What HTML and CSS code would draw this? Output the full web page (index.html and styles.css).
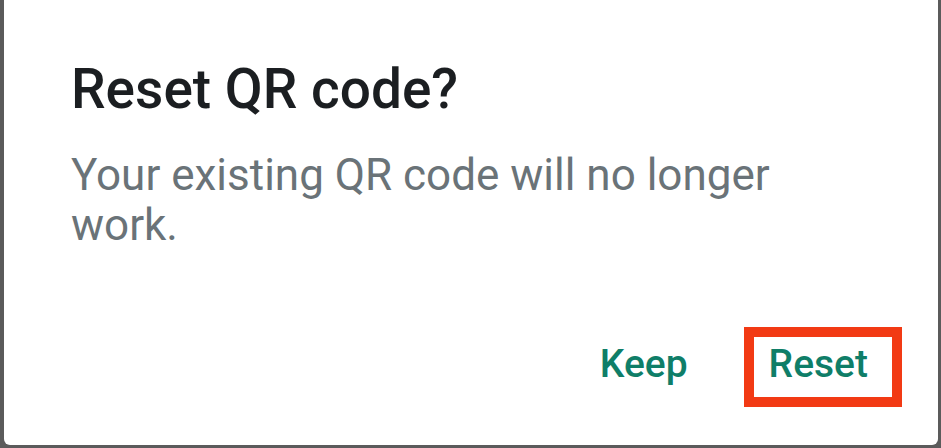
FILE: index.html
```html
<!DOCTYPE html>
<html lang="en">
<head>
    <meta charset="UTF-8">
    <meta name="viewport" content="width=device-width, initial-scale=1.0">
    <title>Reset QR code</title>
    <link rel="stylesheet" href="styles.css">
</head>
<body>
    <div class="frame">
        <div class="dialog">
            <h2 class="title">Reset QR code?</h2>
            <p class="message">Your existing QR code will no longer work.</p>
            <div class="actions">
                <button class="btn">Keep</button>
                <button class="btn btn-marked">Reset</button>
            </div>
        </div>
    </div>
</body>
</html>
```

FILE: styles.css
```css
html, body {margin: 0; height: 100%;}
body {background: #fff; font-family: Roboto, "Liberation Sans", sans-serif;}

.frame {
    height: 448px;
    background: #5b5b5b;
    padding: 0 3px 3px 4px;
    box-sizing: border-box;
}
.dialog {
    height: 100%;
    background: #fff;
    border-radius: 0 0 6px 6px;
    padding: 62px 0 0 67px;
    box-sizing: border-box;
    display: flex;
    flex-direction: column;
}

.title {
    margin: 0;
    font-size: 55px;
    line-height: 54px;
    font-weight: 500;
    color: #1b1e21;
}
.message {
    margin: 34px 0 0;
    width: 730px;
    font-size: 44px;
    line-height: 50px;
    color: #6a7378;
}

.actions {
    margin-top: auto;
    margin-bottom: 38px;
    display: flex;
    justify-content: flex-end;
    align-items: baseline;
    gap: 56px;
    padding-right: 36px;
}
.btn {
    font-family: inherit;
    font-size: 39px;
    line-height: 39px;
    font-weight: 500;
    color: #0f7e68;
    background: none;
    border: 0;
    padding: 0;
}
.btn-marked {
    border: 10px solid #f23a14;
    padding: 8px 24px 13px 15px;
}
```
